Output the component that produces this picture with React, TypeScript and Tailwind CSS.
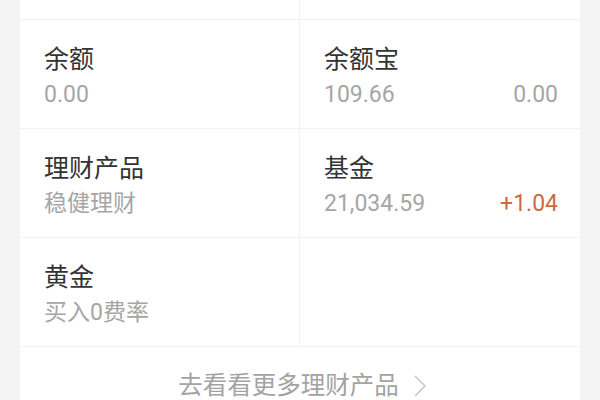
import React from "react";

type Cell = { title: string; sub: string; right?: string; rightColor?: string };

const rows: [Cell, Cell | null][] = [
  [
    { title: "余额", sub: "0.00" },
    { title: "余额宝", sub: "109.66", right: "0.00" },
  ],
  [
    { title: "理财产品", sub: "稳健理财" },
    { title: "基金", sub: "21,034.59", right: "+1.04", rightColor: "text-[#cc6a42]" },
  ],
  [{ title: "黄金", sub: "买入0费率" }, null],
];

function CellView({ c, left }: { c: Cell | null; left: boolean }) {
  return (
    <div
      className={`h-[109px] pl-6 pr-[22px] border-b border-[#f2f2f2] ${left ? "border-r" : ""}`}
    >
      {c && (
        <>
          <div className="mt-[25px] text-[25px] leading-[30px] text-[#333333]">{c.title}</div>
          <div className="mt-[6px] flex items-center justify-between text-[23px] leading-[28px] text-[#a6a6a6]">
            <span>{c.sub}</span>
            {c.right && <span className={c.rightColor ?? ""}>{c.right}</span>}
          </div>
        </>
      )}
    </div>
  );
}

export default function App() {
  return (
    <div
      className="w-[600px] h-[400px] overflow-hidden bg-[#f3f3f3]"
      style={{ fontFamily: 'Roboto, "Noto Sans CJK SC", sans-serif' }}
    >
      <div className="mx-[20px] bg-white h-full">
        <div className="h-[20px] border-b border-[#f2f2f2] grid grid-cols-2">
          <div className="border-r border-[#f2f2f2]" />
          <div />
        </div>
        {rows.map((r, i) => (
          <div key={i} className="grid grid-cols-2">
            <CellView c={r[0]} left />
            <CellView c={r[1]} left={false} />
          </div>
        ))}
        <div className="flex items-center justify-center gap-[14px] pt-[24px] pl-[5px] text-[24.5px] leading-[30px] text-[#a3a3a3]">
          <span>去看看更多理财产品</span>
          <svg width="14" height="24" viewBox="0 0 14 24" fill="none">
            <path d="M2 2 L12 12 L2 22" stroke="#c8c8c8" strokeWidth="1.5" />
          </svg>
        </div>
      </div>
    </div>
  );
}
